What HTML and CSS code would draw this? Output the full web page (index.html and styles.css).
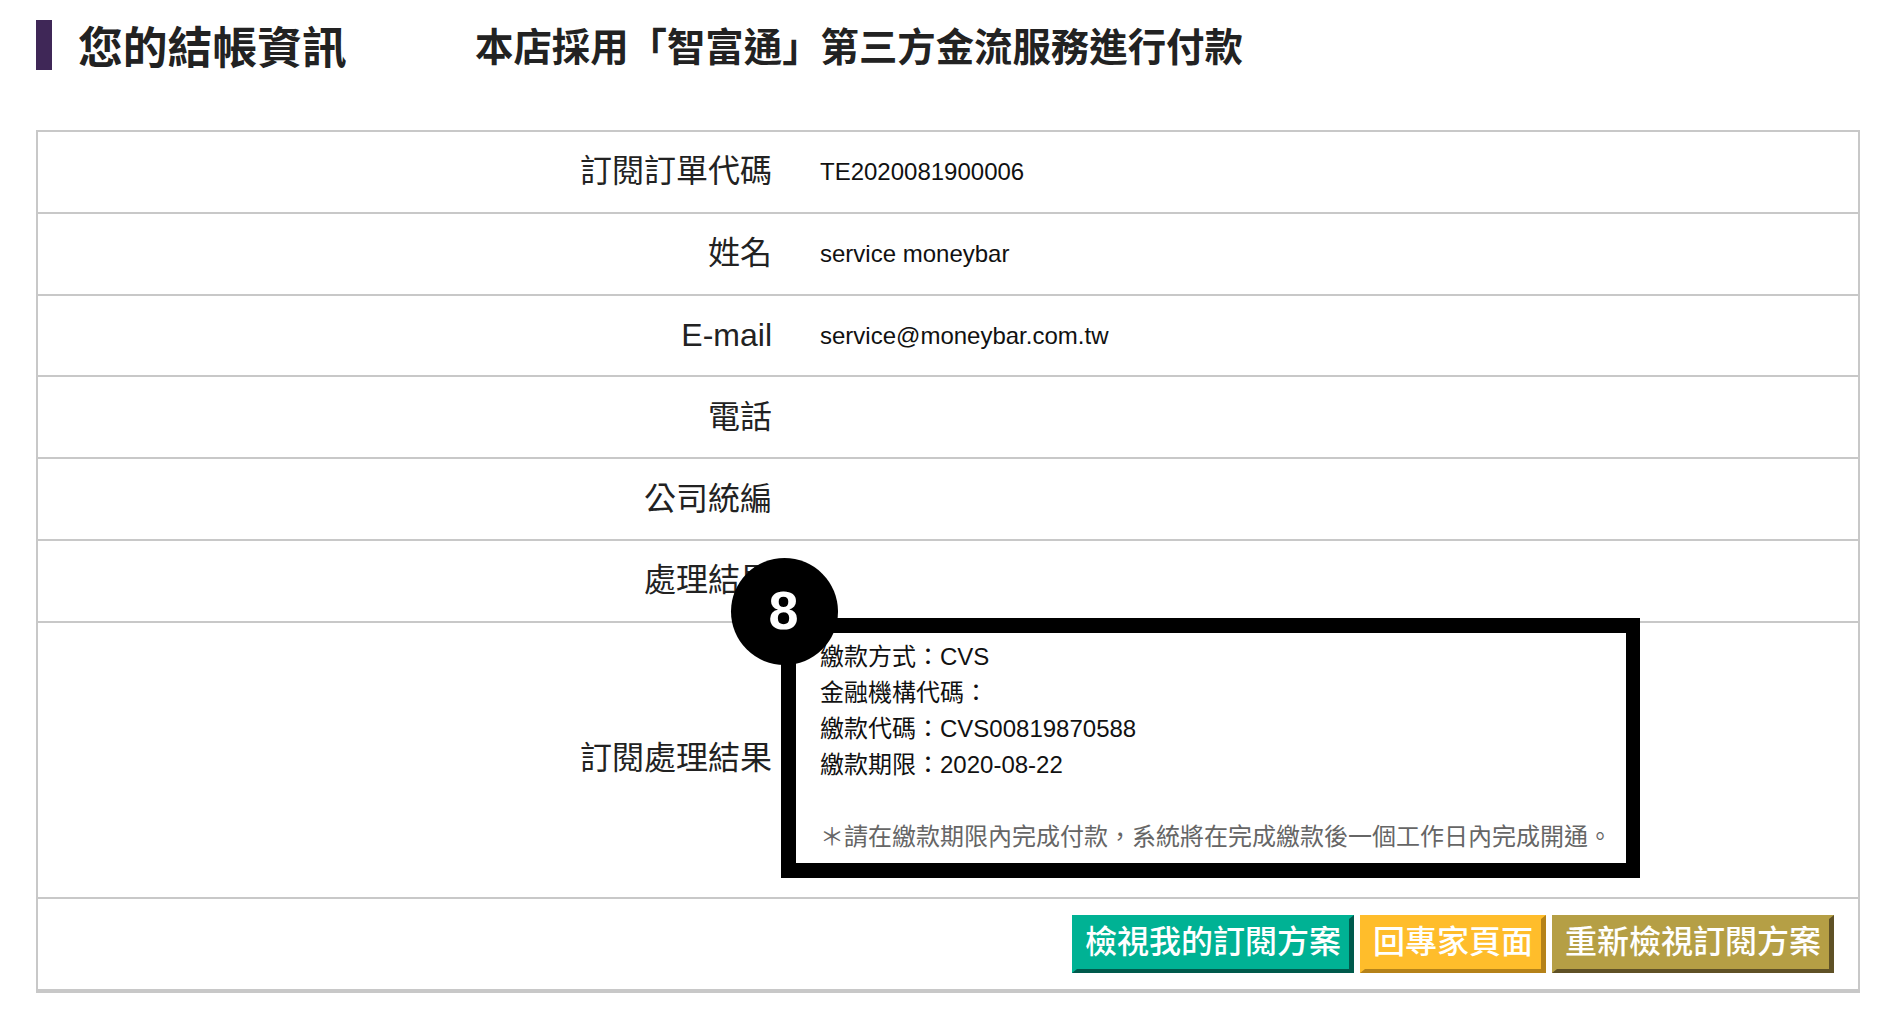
FILE: index.html
```html
<!DOCTYPE html>
<html lang="zh-Hant">
<head>
<meta charset="utf-8">
<title>您的結帳資訊</title>
<link rel="stylesheet" href="styles.css">
</head>
<body>
<main class="page">
  <header class="head">
    <h1 class="title">您的結帳資訊</h1>
    <h2 class="subtitle">本店採用「智富通」第三方金流服務進行付款</h2>
  </header>
  <section class="panel">
    <div class="row"><div class="label">訂閱訂單代碼</div><div class="value">TE2020081900006</div></div>
    <div class="row"><div class="label">姓名</div><div class="value">service moneybar</div></div>
    <div class="row"><div class="label">E-mail</div><div class="value">service@moneybar.com.tw</div></div>
    <div class="row"><div class="label">電話</div><div class="value"></div></div>
    <div class="row"><div class="label">公司統編</div><div class="value"></div></div>
    <div class="row"><div class="label">處理結果</div><div class="value"></div></div>
    <div class="row row-tall">
      <div class="label">訂閱處理結果</div>
      <div class="value details">
        <div>繳款方式：CVS</div>
        <div>金融機構代碼：</div>
        <div>繳款代碼：CVS00819870588</div>
        <div>繳款期限：2020-08-22</div>
        <div class="note">＊請在繳款期限內完成付款，系統將在完成繳款後一個工作日內完成開通。</div>
      </div>
    </div>
    <div class="actions">
      <a class="btn btn-green">檢視我的訂閱方案</a>
      <a class="btn btn-yellow">回專家頁面</a>
      <a class="btn btn-olive">重新檢視訂閱方案</a>
    </div>
  </section>
  <div class="callout"></div>
  <div class="badge">8</div>
</main>
</body>
</html>
```
FILE: styles.css
```css
* { box-sizing: border-box; }
html, body { margin: 0; padding: 0; background: #fff; }
body {
  font-family: "Liberation Sans", "Noto Sans CJK TC", sans-serif;
  color: #111;
}
.page { position: relative; width: 1896px; height: 1028px; padding: 20px 36px 0; }
.head { display: flex; align-items: center; height: 50px; margin-bottom: 60px; }
.title {
  margin: 0;
  width: 439px;
  height: 50px;
  padding: 3px 0 0 26px;
  border-left: 16px solid #3f2757;
  font-size: 44.8px;
  line-height: 50px;
  font-weight: 700;
  color: #222;
}
.subtitle {
  margin: 0;
  padding-top: 6px;
  font-size: 38.4px;
  line-height: 50px;
  font-weight: 700;
  color: #222;
}
.panel {
  width: 1824px;
  border: 2px solid #c8c8c8;
  border-bottom-width: 4px;
}
.row {
  display: grid;
  grid-template-columns: 734px 1fr;
  column-gap: 48px;
  align-items: center;
  height: 81.8px;
  padding-bottom: 1px;
  border-bottom: 2px solid #c8c8c8;
}
.row-tall { height: 276px; padding-bottom: 3px; }
.label { text-align: right; font-size: 32px; line-height: 40px; color: #222; }
.value { padding-top: 2px; font-size: 24px; line-height: 36px; color: #111; }
.details { align-self: start; padding-top: 16px; }
.note { margin-top: 36px; color: #666; }
.actions {
  display: flex;
  justify-content: flex-end;
  gap: 6px;
  height: 90px;
  padding: 16px 24px 0 0;
}
.btn {
  display: block;
  height: 58px;
  padding: 0 8px;
  border-style: solid;
  border-width: 4px 5px 4px 5px;
  font-size: 32px;
  font-weight: 500;
  line-height: 47px;
  color: #fff;
}
.btn-green { background: #00b294; border-color: #00b294 #005a4c #005a4c #00b294; }
.btn-yellow { background: #ffbd2b; border-color: #ffbd2b #b58219 #b58219 #ffbd2b; }
.btn-olive { background: #b59f45; border-color: #b59f45 #5f5126 #5f5126 #b59f45; }
.callout {
  position: absolute;
  left: 781px;
  top: 618px;
  width: 859px;
  height: 260px;
  border: 15px solid #000;
  border-right-width: 14px;
}
.badge {
  position: absolute;
  left: 731px;
  top: 558px;
  width: 107px;
  height: 107px;
  border-radius: 50%;
  background: #000;
  color: #fff;
  font-size: 54px;
  font-weight: 700;
  line-height: 105px;
  text-align: center;
  padding-right: 2px;
}
```
